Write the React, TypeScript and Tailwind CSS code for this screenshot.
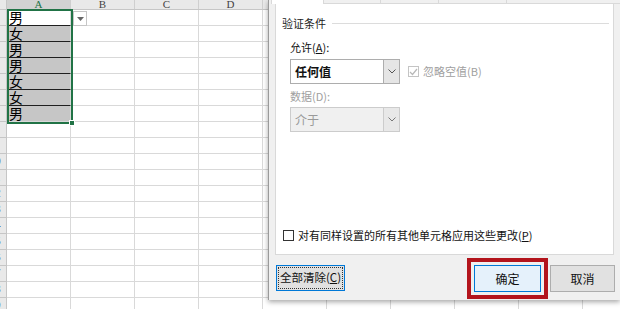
import React from "react";

const cols = ["A", "B", "C", "D", "E", "F", "G", "H", "I", "J"];
const values = ["男", "女", "男", "男", "女", "女", "男"];
const rowCount = 19;

function Chevron({ color = "#555" }: { color?: string }) {
  return (
    <svg width="8" height="5" viewBox="0 0 8 5">
      <polyline points="0.5,0.5 4,4 7.5,0.5" fill="none" stroke={color} strokeWidth="1" />
    </svg>
  );
}

function Sheet() {
  return (
    <div className="flex flex-col bg-white">
      <div className="flex h-[10px] border-b border-[#c6c6c6] bg-[#e9e9e9]">
        <div className="w-[7px] shrink-0 border-r border-[#c6c6c6]" />
        {cols.map((c, i) => (
          <div
            key={c}
            className={
              "flex w-[64px] shrink-0 items-end justify-center overflow-hidden border-r border-[#cfcfcf] font-['Liberation_Serif',serif] text-[11px] leading-[9px] " +
              (i === 0 ? "bg-[#d2d2d2] text-[#217346]" : "text-[#444]")
            }
          >
            {c}
          </div>
        ))}
      </div>
      {Array.from({ length: rowCount }).map((_, r) => (
        <div key={r} className="flex h-[16px]">
          <div className="flex w-[7px] shrink-0 justify-end overflow-hidden border-r border-b border-[#c6c6c6] bg-[#e9e9e9]">
            <div className="w-[23px] shrink-0 text-center font-['Liberation_Sans',sans-serif] text-[11px] leading-[15px] text-[#222]">
              {r + 1}
            </div>
          </div>
          {cols.map((c, i) => {
            const inSel = i === 0 && r < values.length;
            const shaded = inSel && r > 0;
            const darkLine = inSel && r < values.length - 1;
            return (
              <div
                key={c}
                className={
                  "w-[64px] shrink-0 border-r border-b border-r-[#d9d9d9] pl-[2px] font-['Noto_Sans_CJK_SC',sans-serif] text-[14px] leading-[15px] text-black " +
                  (darkLine ? "border-b-[#1f1f1f] " : "border-b-[#d9d9d9] ") +
                  (shaded ? "bg-[#c6c6c6]" : "bg-white")
                }
              >
                {inSel ? values[r] : ""}
              </div>
            );
          })}
        </div>
      ))}
    </div>
  );
}

function Select({ text, disabled }: { text: string; disabled?: boolean }) {
  return (
    <div
      className={
        "flex h-[25px] w-[110px] items-stretch border " +
        (disabled ? "border-[#cccccc] bg-[#f0f0f0]" : "border-[#adadad] bg-white")
      }
    >
      <div
        className={
          "flex flex-1 items-center pl-[4px] text-[12px] " +
          (disabled ? "text-[#9a9a9a]" : "font-semibold text-[#111]")
        }
      >
        {text}
      </div>
      <div
        className={
          "flex w-[16px] items-center justify-center border-l " +
          (disabled ? "border-[#cccccc] bg-[#e8e8e8]" : "border-[#adadad] bg-[#e5e5e5]")
        }
      >
        <Chevron color={disabled ? "#777" : "#555"} />
      </div>
    </div>
  );
}

function Dialog() {
  return (
    <div className="absolute left-[268px] top-0 flex h-[300px] w-[352px] flex-col border-l border-[#9a9a9a] bg-[#f0f0f0] font-['Noto_Sans_CJK_SC',sans-serif] shadow-[0_2px_5px_rgba(0,0,0,0.35)]">
      <div className="flex h-[4px] pl-[2px]">
        <div className="w-[53px] border-x border-[#d9d9d9] bg-white" />
        <div className="w-[57px] border-r border-b border-[#d9d9d9]" />
        <div className="w-[58px] border-r border-b border-[#d9d9d9]" />
        <div className="w-[68px] border-r border-b border-[#d9d9d9]" />
        <div className="flex-1 border-b border-[#d9d9d9]" />
      </div>
      <div className="mx-[6px] flex h-[251px] flex-col border border-t-0 border-[#d9d9d9] bg-white pl-[6px] pr-[4px]">
        <div className="mt-[13px] flex items-center gap-[6px]">
          <span className="text-[11px] leading-[12px] text-[#222]">验证条件</span>
          <div className="h-px flex-1 bg-[#dcdcdc]" />
        </div>
        <div className="pl-[8px]">
          <div className="mt-[12px] text-[11px] leading-[12px] text-[#111]">
            允许(<span className="underline">A</span>):
          </div>
          <div className="mt-[6px] flex items-center">
            <Select text="任何值" />
            <div className="ml-[8px] flex items-center gap-[4px]">
              <div className="flex h-[11px] w-[11px] items-center justify-center border border-[#c4c4c4] bg-white">
                <svg width="9" height="8" viewBox="0 0 9 8">
                  <polyline points="1,4 3.5,6.5 8,1" fill="none" stroke="#b8b8b8" strokeWidth="1.2" />
                </svg>
              </div>
              <span className="text-[11px] text-[#a0a0a0]">忽略空值(B)</span>
            </div>
          </div>
          <div className="mt-[6px] text-[11px] leading-[12px] text-[#a0a0a0]">数据(D):</div>
          <div className="mt-[5px]">
            <Select text="介于" disabled />
          </div>
        </div>
        <div className="mt-[97px] flex items-center gap-[4px] pl-[1px]">
          <div className="h-[11px] w-[11px] border border-[#333] bg-white" />
          <span className="whitespace-nowrap text-[11px] leading-[12px] text-[#111]">
            对有同样设置的所有其他单元格应用这些更改(<span className="underline">P</span>)
          </span>
        </div>
      </div>
      <div className="mt-[3px] flex items-start pl-[7px] pr-[5px]">
        <div className="mt-[7px] flex h-[26px] w-[69px] items-center justify-center border border-[#0078d7] bg-[#e1e1e1] p-px">
          <div className="flex h-full w-full items-center justify-center whitespace-nowrap border border-dotted border-[#333] text-[11.5px] text-[#111]">
            全部清除(<span className="underline">C</span>)
          </div>
        </div>
        <div className="flex-1" />
        <div className="border-[4px] border-[#b3141c] p-[3px]">
          <div className="flex h-[27px] w-[67px] items-center justify-center border border-[#0078d7] bg-[#e5f1fb] text-[12px] text-[#111]">
            确定
          </div>
        </div>
        <div className="ml-[2px] mt-[7px] flex h-[27px] w-[65px] items-center justify-center border border-[#adadad] bg-[#e1e1e1] text-[12px] text-[#111]">
          取消
        </div>
      </div>
    </div>
  );
}

export default function App() {
  return (
    <div className="relative h-[309px] w-[620px] overflow-hidden bg-white">
      <Sheet />
      <div className="pointer-events-none absolute left-[7px] top-[9px] h-[115px] w-[66px] border-2 border-[#217346]" />
      <div className="absolute left-[69px] top-[120px] h-[6px] w-[6px] border border-white bg-[#217346]" />
      <div className="absolute left-[73px] top-[11px] flex h-[15px] w-[14px] items-center justify-center border border-[#c6c6c6] bg-white">
        <svg width="7" height="4" viewBox="0 0 7 4">
          <polygon points="0,0 7,0 3.5,4" fill="#666" />
        </svg>
      </div>
      <Dialog />
    </div>
  );
}
